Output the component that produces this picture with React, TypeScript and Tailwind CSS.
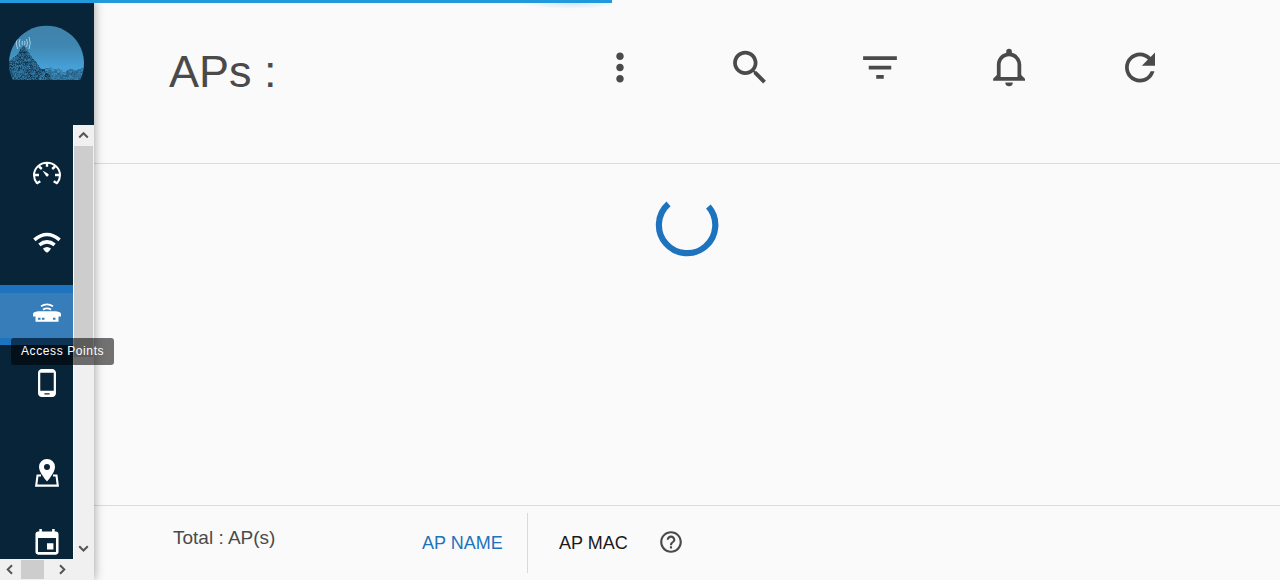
import type { ReactNode } from "react";

const noise = (x: number, y: number) => {
  const v = Math.sin(x * 127.1 + y * 311.7) * 43758.5453;
  return v - Math.floor(v);
};

const peaks: [number, number][] = [[0, 36], [4, 32], [8, 29], [11, 24], [14, 21], [18, 25], [22, 31], [27, 37], [32, 44], [36, 43], [41, 42], [45, 44], [49, 43], [55, 47], [61, 43], [66, 45], [75, 42]];
const ridge = (x: number) => {
  for (let i = 1; i < peaks.length; i++) {
    const [x0, y0] = peaks[i - 1];
    const [x1, y1] = peaks[i];
    if (x <= x1) return y0 + ((x - x0) / (x1 - x0)) * (y1 - y0);
  }
  return 44;
};

const rocks: { x: number; y: number; o: number }[] = [];
for (let x = 0; x < 75; x++) {
  for (let y = 20; y < 55; y++) {
    const depth = y - ridge(x);
    if (depth < 0) continue;
    const near = x < 18 + (y - 22) * 0.8;
    const patch = noise(Math.floor(x / 3) + 5, Math.floor(y / 2) + 9) * 0.3;
    const o = near ? 0.15 + patch + 0.5 * noise(x, y) : patch + depth * 0.015 + 0.22 * noise(x, y);
    rocks.push({ x, y, o });
  }
}

function Logo() {
  return (
    <svg className="block h-[56px] w-[75px]" viewBox="0 0 75 56">
      <defs>
        <linearGradient id="sky" x1="0" y1="0" x2="0" y2="1">
          <stop offset="0" stopColor="#3f83ab" />
          <stop offset="0.35" stopColor="#3f86b0" />
          <stop offset="0.75" stopColor="#469fd5" />
          <stop offset="1" stopColor="#429bd0" />
        </linearGradient>
        <clipPath id="dome"><path d="M4 55A37.500 37.500 0 1 1 71 55Z" /></clipPath>
      </defs>
      <g clipPath="url(#dome)">
        <rect width="75" height="56" fill="url(#sky)" />
        <g shapeRendering="crispEdges">
          {rocks.map((r) => <rect key={`${r.x}-${r.y}`} x={r.x} y={r.y} width="1" height="1" fill="#092438" opacity={r.o} />)}
        </g>
        <g fill="none" stroke="#b4d3e6" strokeWidth="1" opacity=".9">
          <path d="M8.500 12q-2.500 6 0 12M11 14q-2 4 0 8M13.500 16q-1 2 0 4M20 12q2.500 6 0 12M17.500 14q2 4 0 8M15.500 16q1 2 0 4" />
        </g>
      </g>
    </svg>
  );
}

function Icon({ d, className, viewBox = "0 0 24 24" }: { d: string; className: string; viewBox?: string }) {
  return <svg viewBox={viewBox} fill="currentColor" className={`block shrink-0 ${className}`}><path d={d} /></svg>;
}

function Small({ children }: { children: ReactNode }) {
  return <svg viewBox="0 0 30 30" className="block h-[30px] w-[30px] shrink-0" fill="none" stroke="white">{children}</svg>;
}

const tools = [
  { name: "More", d: "M12 8c1.100 0 2-.9 2-2s-.9-2-2-2-2 .9-2 2 .9 2 2 2zm0 2c-1.100 0-2 .9-2 2s.9 2 2 2 2-.9 2-2-.9-2-2-2zm0 6c-1.100 0-2 .9-2 2s.9 2 2 2 2-.9 2-2-.9-2-2-2z" },
  { name: "Search", d: "M15.500 14h-.79l-.28-.27C15.410 12.590 16 11.110 16 9.500 16 5.910 13.090 3 9.500 3S3 5.910 3 9.500 5.910 16 9.500 16c1.610 0 3.090-.59 4.230-1.570l.27.28v.79l5 4.990L20.490 19l-4.990-5zm-6 0C7.010 14 5 11.990 5 9.500S7.010 5 9.500 5 14 7.010 14 9.500 11.990 14 9.500 14z" },
  { name: "Filter", d: "M10 18h4v-2h-4v2zM3 6v2h18V6H3zm3 7h12v-2H6v2z" },
  { name: "Alerts", d: "M16 17H7V10.500C7 8 9 6 11.500 6S16 8 16 10.500M18 16V10.500C18 7.430 15.860 4.860 13 4.180V3.500A1.500 1.500 0 0 0 10 3.500V4.180C7.130 4.860 5 7.430 5 10.500V16L3 18V19H20V18M11.500 22A2 2 0 0 0 13.500 20H9.500A2 2 0 0 0 11.500 22Z" },
  { name: "Refresh", d: "M17.650 6.350C16.200 4.900 14.210 4 12 4c-4.420 0-7.990 3.580-7.990 8s3.570 8 7.990 8c3.730 0 6.840-2.550 7.730-6h-2.080c-.82 2.330-3.040 4-5.650 4-3.310 0-6-2.690-6-6s2.690-6 6-6c1.660 0 3.140.69 4.220 1.780L13 11h7V4l-2.350 2.350z" },
];

function Chevron({ d }: { d: string }) {
  return <svg viewBox="0 0 21 21" className="block h-[21px] w-[21px] shrink-0" fill="none" stroke="#555" strokeWidth="2"><path d={d} /></svg>;
}

function Sidebar() {
  return (
    <aside className="relative z-10 flex h-[580px] w-[94px] shrink-0 flex-col bg-[#072438] shadow-[0_0_10px_rgba(0,0,0,0.38)]">
      <div className="flex h-[125px] shrink-0 pl-[9px] pt-[25px]"><Logo /></div>
      <div className="flex h-[434px]">
        <nav className="flex w-[73px] flex-col overflow-hidden pt-[33px]">
          <a className="flex h-[30px] shrink-0 pl-8">
            <Small>
              <path d="M5 25.500Q2 21.500 2 17.200A13 12.500 0 0 1 28 17.200Q28 21.500 25 25.500" strokeWidth="2" />
              <path d="M15 4.500v4.300M7 8.500l2.800 2.500M23 8.500L20.200 11M3 17h4M27 17h-4M4.500 25.500l3.800-2.300M25.500 25.500l-3.800-2.300" strokeWidth="2.400" />
              <path d="M10.500 12.500L15.700 15.500A1.500 1.500 0 1 1 13.700 17.500Z" fill="white" stroke="none" />
            </Small>
          </a>
          <a className="mt-10 flex h-[30px] shrink-0 pl-8">
            <Small>
              <path d="M2.400 11.900Q15 1.100 27.600 11.900M7.400 16.900Q15 10.900 22.600 16.900" strokeWidth="3.600" />
              <path d="M11 20.500Q15 17.500 19 20.500Q17.500 23.500 15 24.800Q12.500 23.500 11 20.500Z" fill="white" stroke="none" />
            </Small>
          </a>
          <a className="mt-[27px] flex h-[60px] shrink-0 border-b-[7px] border-t-8 border-[#1e73be] bg-[#377db9] pl-8 pt-[5px]">
            <Small>
              <path d="M9 8.300Q15 4.300 21 8.300M11 11.600Q15 9.300 19 11.600" strokeWidth="1.800" />
              <path d="M6 13.300H24Q29 14 29 16V18.500H26.500V23.800H3.500V18.500H1V16Q1 14 6 13.300Z" fill="white" stroke="none" />
              <path d="M6 20.800h2.500M10 20.800h2.500M21 20.800h2.500" stroke="#377db9" strokeWidth="2" />
            </Small>
          </a>
          <a className="mt-[23px] flex h-[30px] shrink-0 pl-8 text-white">
            <Icon className="h-[30px] w-[30px]" viewBox="0.3 0.3 23.4 23.4" d="M16 1H8C6.340 1 5 2.340 5 4v16c0 1.660 1.340 3 3 3h8c1.660 0 3-1.340 3-3V4c0-1.660-1.340-3-3-3zm-2 20h-4v-1h4v1zm3.250-3H6.750V4h10.500v14z" />
          </a>
          <a className="mt-[60px] flex h-[30px] shrink-0 pl-8">
            <Small>
              <path d="M9 17.500H5.500L4.200 27.600H25.800L24.500 17.500H21" strokeWidth="2.100" />
              <path fillRule="evenodd" d="M15 1A7.900 7.900 0 0 0 7 9C7 14.600 15 23.500 15 23.500S23 14.600 23 9A7.900 7.900 0 0 0 15 1ZM15 6A3 3 0 1 1 15 12 3 3 0 0 1 15 6Z" fill="white" stroke="none" />
            </Small>
          </a>
          <a className="mt-10 flex h-[30px] shrink-0 pl-8 text-white">
            <Icon className="h-[30px] w-[30px]" viewBox="0.3 0.2 23.4 23.4" d="M17 12h-5v5h5v-5zM16 1v2H8V1H6v2H5c-1.110 0-1.990.9-1.990 2L3 19c0 1.100.89 2 2 2h14c1.100 0 2-.9 2-2V5c0-1.100-.9-2-2-2h-1V1h-2zm3 18H5V8h14v11z" />
          </a>
        </nav>
        <div className="flex w-[21px] flex-col border-l border-white bg-[#f0f0f0]">
          <Chevron d="M5.200 12.500L9.500 8.200 13.800 12.500" />
          <div className="mr-px h-[211px] bg-[#cdcdcd]" />
          <div className="mt-auto"><Chevron d="M5.200 8.200L9.500 12.500 13.800 8.200" /></div>
        </div>
      </div>
      <div className="flex h-[21px] bg-[#f0f0f0]">
        <Chevron d="M12 6.200L7.700 10.500 12 14.800" />
        <div className="mb-px mt-px w-[23px] bg-[#cdcdcd]" />
        <div className="ml-2"><Chevron d="M8 6.200L12.300 10.500 8 14.800" /></div>
      </div>
      <div className="absolute left-[11px] top-[338px] h-[27px] w-[103px] whitespace-nowrap rounded-[3px] bg-black/55 pl-[10px] pt-[5px] text-[12px] leading-4 tracking-[0.6px] text-white">Access Points</div>
    </aside>
  );
}

export default function App() {
  return (
    <div className="relative flex h-[580px] w-[1280px] overflow-hidden bg-[#fafafa] font-['Liberation_Sans',Arial,sans-serif] text-[#4a4a4a]">
      <Sidebar />
      <main className="flex flex-1 flex-col">
        <header className="flex h-[164px] justify-between border-b border-[#dadada] pl-[75px] pr-[117px] pt-[45px]">
          <h1 className="pt-px text-[45px] leading-[52px]">APs :</h1>
          <div className="flex gap-[85px]">
            {tools.map((t) => <button key={t.name} aria-label={t.name} className="h-[45px] w-[45px]"><Icon className="h-[45px] w-[45px]" viewBox="0.27 0 24 24" d={t.d} /></button>)}
          </div>
        </header>
        <section className="flex h-[341px] justify-center pt-[31px]">
          <svg viewBox="0 0.5 64 64" className="h-16 w-16" fill="none" stroke="#1e73be" strokeWidth="6.200"><path d="M13.500 9.300A28.200 28.200 0 1 0 53.400 12" /></svg>
        </section>
        <footer className="flex h-[75px] border-t border-[#dadada] text-[18px] leading-5">
          <div className="w-[328px] pl-[79px] pt-[22px] text-[19px]">Total : AP(s)</div>
          <div className="mt-[7px] h-[60px] w-[106px] border-r border-[#dadada] pt-5 text-[#1e73be]">AP NAME</div>
          <div className="w-[101px] pl-[31px] pt-[27px] text-[#1a1a1a]">AP MAC</div>
          <div className="pl-[29px] pt-[23px]">
            <Icon className="h-[26px] w-[26px]" d="M11 18h2v-2h-2v2zm1-16C6.480 2 2 6.480 2 12s4.480 10 10 10 10-4.480 10-10S17.520 2 12 2zm0 18c-4.410 0-8-3.590-8-8s3.590-8 8-8 8 3.590 8 8-3.590 8-8 8zm0-14c-2.210 0-4 1.790-4 4h2c0-1.100.9-2 2-2s2 .9 2 2c0 2-3 1.750-3 5h2c0-2.250 3-2.500 3-5 0-2.210-1.790-4-4-4z" />
          </div>
        </footer>
      </main>
      <div className="absolute left-0 top-0 z-20 h-[3px] w-[612px] bg-[#2299dd]">
        <div className="absolute right-0 top-[3px] h-[6px] w-[92px] bg-[radial-gradient(ellipse_at_55%_0%,rgba(34,153,221,0.2),transparent_70%)]" />
      </div>
    </div>
  );
}
